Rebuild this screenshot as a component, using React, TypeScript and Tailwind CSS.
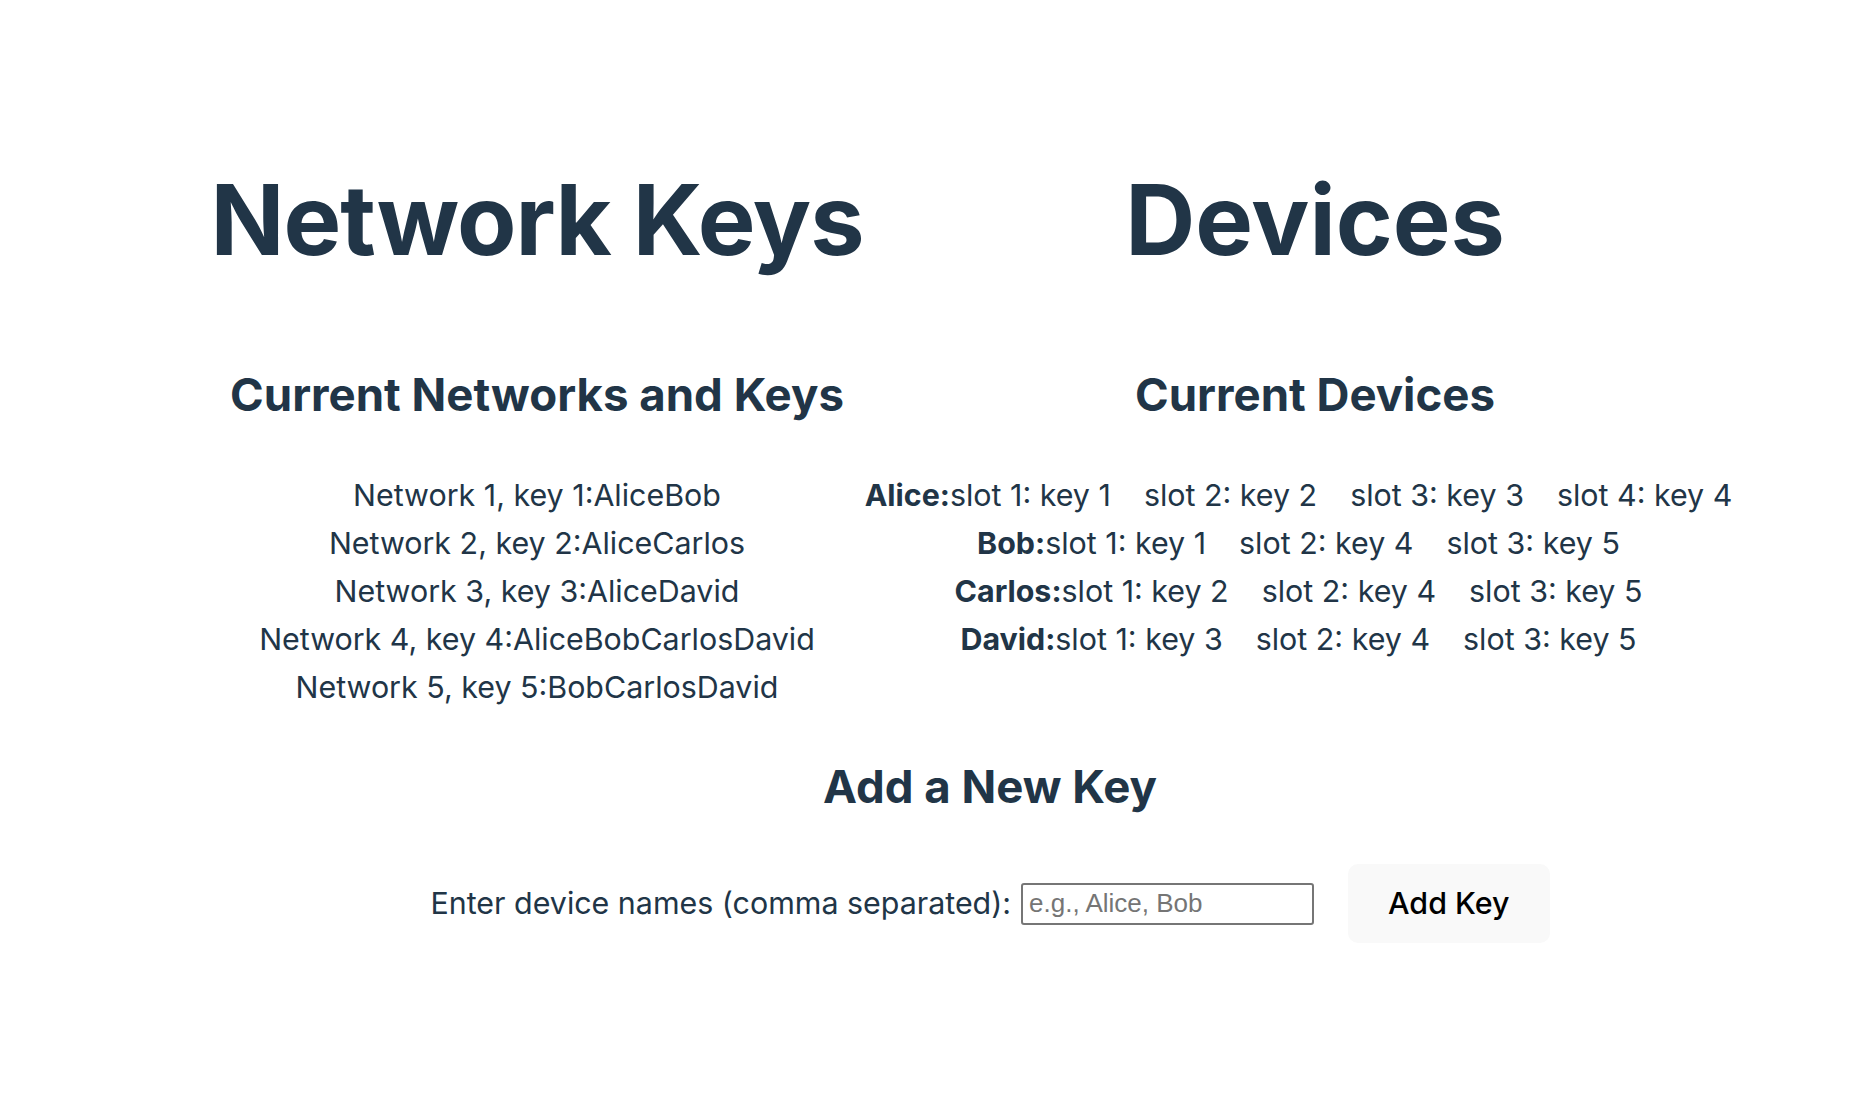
import React from "react";

const networks: { id: number; members: string[] }[] = [
  { id: 1, members: ["Alice", "Bob"] },
  { id: 2, members: ["Alice", "Carlos"] },
  { id: 3, members: ["Alice", "David"] },
  { id: 4, members: ["Alice", "Bob", "Carlos", "David"] },
  { id: 5, members: ["Bob", "Carlos", "David"] },
];

const devices: { name: string; keys: number[] }[] = [
  { name: "Alice", keys: [1, 2, 3, 4] },
  { name: "Bob", keys: [1, 4, 5] },
  { name: "Carlos", keys: [2, 4, 5] },
  { name: "David", keys: [3, 4, 5] },
];

function NetworkKeys() {
  return (
    <div className="w-[650px] flex flex-col items-center">
      <h1 className="text-[97px] leading-[1.1] font-bold tracking-[-0.01em] whitespace-nowrap">
        Network Keys
      </h1>
      <h2 className="mt-[87px] text-[45.6px] leading-[1.5] font-bold whitespace-nowrap">
        Current Networks and Keys
      </h2>
      <ul className="mt-[42px]">
        {networks.map((n) => (
          <li key={n.id} className="leading-[48px] whitespace-nowrap">
            Network {n.id}, key {n.id}:{n.members.join("")}
          </li>
        ))}
      </ul>
    </div>
  );
}

function Devices() {
  return (
    <div className="w-[906px] flex flex-col items-center">
      <h1 className="text-[97px] leading-[1.1] font-bold whitespace-nowrap">
        Devices
      </h1>
      <h2 className="mt-[87px] text-[45.6px] leading-[1.5] font-bold whitespace-nowrap">
        Current Devices
      </h2>
      <ul className="mt-[42px]">
        {devices.map((d) => (
          <li key={d.name} className="leading-[48px] whitespace-nowrap">
            <strong className="font-bold">{d.name}:</strong>
            {d.keys.map((k, i) => (
              <span key={k} className="mr-[33px]">
                slot {i + 1}: key {k}
              </span>
            ))}
          </li>
        ))}
      </ul>
    </div>
  );
}

export default function App() {
  return (
    <div
      className="min-h-[1108px] bg-white text-[#213547] text-[30.4px] text-center pt-[167px] pl-[122px]"
      style={{ fontFamily: "Inter, 'Liberation Sans', sans-serif" }}
    >
      <div className="flex justify-center items-start">
        <NetworkKeys />
        <Devices />
      </div>
      <h2 className="mt-[42px] text-[45.6px] leading-[1.5] font-bold">
        Add a New Key
      </h2>
      <div className="mt-[43px] flex justify-center items-center">
        <label className="leading-[1.5]">
          Enter device names (comma separated):
        </label>
        <input
          type="text"
          placeholder="e.g., Alice, Bob"
          className="ml-[10px] w-[293px] h-[42px] px-[6px] border-2 border-[#767676] rounded-[3px] text-[26px] placeholder:text-[#757575] outline-none"
          style={{ fontFamily: "'Liberation Sans', Arial, sans-serif" }}
        />
        <button className="ml-[34px] px-[39px] py-[18px] rounded-[10px] border border-transparent bg-[#f9f9f9] text-black font-medium leading-[41px]">
          Add Key
        </button>
      </div>
    </div>
  );
}
